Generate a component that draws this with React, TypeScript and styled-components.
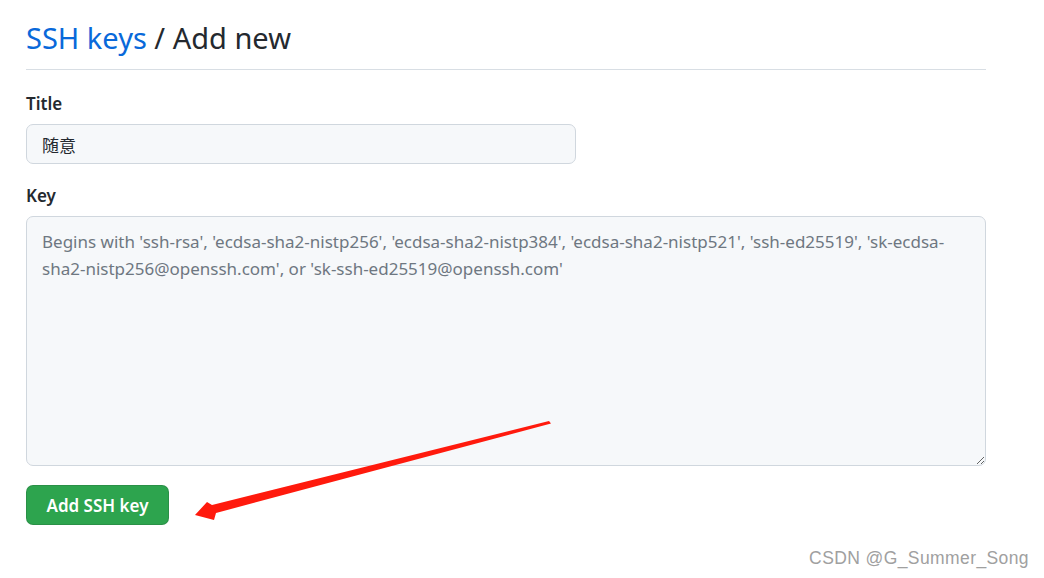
import React from "react";
import styled, { createGlobalStyle } from "styled-components";

const Global = createGlobalStyle`
  html, body { margin: 0; padding: 0; background: #ffffff; }
  body { font-family: "Noto Sans", "Open Sans", "Noto Sans CJK SC", sans-serif; color: #24292f; }
  * { box-sizing: border-box; }
`;

const Page = styled.div`
  position: relative;
  width: 1044px;
  height: 578px;
  padding: 16px 0 0 26px;
  overflow: hidden;
`;

const Content = styled.div`
  width: 960px;
  display: flex;
  flex-direction: column;
`;

const Header = styled.div`
  border-bottom: 1px solid #d8dee4;
  padding-bottom: 9px;
  margin-bottom: 21px;
`;

const Heading = styled.h2`
  margin: 0;
  font-size: 29px;
  font-weight: 400;
  line-height: 44px;
  color: #24292f;
`;

const Crumb = styled.a`
  color: #0969da;
  text-decoration: none;
`;

const Field = styled.div`
  display: flex;
  flex-direction: column;
  margin-bottom: 19px;
`;

const Label = styled.label`
  font-size: 17px;
  font-weight: 600;
  line-height: 26px;
  margin-bottom: 7px;
`;

const Input = styled.input`
  width: 550px;
  height: 40px;
  padding: 0 15px;
  border: 1px solid #d0d7de;
  border-radius: 7px;
  background: #f6f8fa;
  font-family: "Noto Sans", "Noto Sans CJK SC", sans-serif;
  font-size: 17px;
  color: #24292f;
  outline: none;
`;

const TextArea = styled.textarea`
  width: 960px;
  height: 250px;
  padding: 11px 15px;
  border: 1px solid #d0d7de;
  border-radius: 7px;
  background: #f6f8fa;
  font-family: "Noto Sans", sans-serif;
  font-size: 17px;
  line-height: 27px;
  color: #24292f;
  outline: none;
  resize: vertical;
  &::placeholder { color: #6e7781; }
`;

const Button = styled.button`
  width: 143px;
  height: 40px;
  border: 1px solid rgba(27, 31, 36, 0.15);
  border-radius: 7px;
  background: #2da44e;
  color: #ffffff;
  font-family: "Noto Sans", sans-serif;
  font-size: 17px;
  font-weight: 600;
  cursor: pointer;
`;

const Arrow = styled.svg`
  position: absolute;
  left: 0;
  top: 0;
  pointer-events: none;
`;

const Watermark = styled.div`
  position: absolute;
  right: 15px;
  bottom: 9px;
  font-family: "Liberation Sans", Arial, sans-serif;
  font-size: 17.5px;
  color: #a0a0a0;
  letter-spacing: 0.4px;
`;

export default function App() {
  return (
    <>
      <Global />
      <Page>
        <Content>
          <Header>
            <Heading>
              <Crumb href="#">SSH keys</Crumb> / Add new
            </Heading>
          </Header>
          <Field>
            <Label>Title</Label>
            <Input defaultValue="随意" />
          </Field>
          <Field>
            <Label>Key</Label>
            <TextArea placeholder="Begins with 'ssh-rsa', 'ecdsa-sha2-nistp256', 'ecdsa-sha2-nistp384', 'ecdsa-sha2-nistp521', 'ssh-ed25519', 'sk-ecdsa-sha2-nistp256@openssh.com', or 'sk-ssh-ed25519@openssh.com'" />
          </Field>
          <div>
            <Button>Add SSH key</Button>
          </div>
        </Content>
        <Arrow width="1044" height="578" viewBox="0 0 1044 578">
          <polygon
            points="549,421 551,423.5 216,513 214,520 195,515 207,502 212,505"
            fill="#ff1a0d"
          />
        </Arrow>
        <Watermark>CSDN @G_Summer_Song</Watermark>
      </Page>
    </>
  );
}
